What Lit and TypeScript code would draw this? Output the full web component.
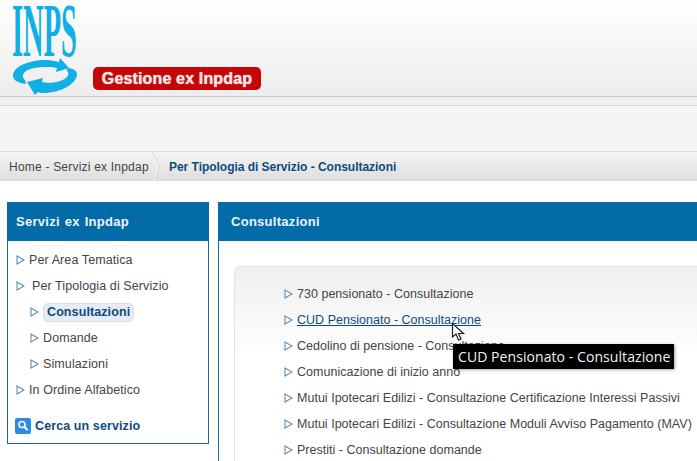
import { LitElement, html, css } from "lit";
import { customElement } from "lit/decorators.js";

const arrow = html`<svg class="arr" width="9" height="10" viewBox="0 0 9 10"><path d="M1 1 L8 5 L1 9 Z" fill="#fff" stroke="#5d8fb5" stroke-width="1.1"/></svg>`;

const items = [
  "730 pensionato - Consultazione",
  "CUD Pensionato - Consultazione",
  "Cedolino di pensione - Consultazione",
  "Comunicazione di inizio anno",
  "Mutui Ipotecari Edilizi - Consultazione Certificazione Interessi Passivi",
  "Mutui Ipotecari Edilizi - Consultazione Moduli Avviso Pagamento (MAV)",
  "Prestiti - Consultazione domande",
];

@customElement("app-root")
export class AppRoot extends LitElement {
  static styles = css`
    :host { display: block; width: 697px; height: 461px; overflow: hidden; position: relative; background: #fff;
      font-family: "Liberation Sans", Arial, sans-serif; font-size: 12.5px; color: #444; }
    .head { height: 96px; background: linear-gradient(#fff, #ededed); border-bottom: 1px solid #c6caca; display: flex; align-items: flex-start; }
    .logo { width: 93px; height: 96px; flex: none; position: relative; }
    .inps { position: absolute; left: 12px; top: 0; font-family: "Liberation Serif", serif; font-weight: bold; color: #12aee6; font-size: 76px; line-height: 60px; transform-origin: 0 0; transform: scaleX(0.375); white-space: nowrap; }
    .swirl { position: absolute; left: 12px; top: 58px; }
    .badge { margin-top: 67px; width: 168px; height: 23px; border-radius: 5px; background: #c60606; color: #f0e6e6; font-weight: bold; font-size: 16px; letter-spacing: .15px; line-height: 23px; text-align: center; white-space: nowrap; text-shadow: 0 0 1px #fff; }
    .band1 { height: 8px; background: #eeefef; border-bottom: 1px solid #d6d8d8; }
    .band2 { height: 45px; background: #f5f5f5; border-bottom: 1px solid #dcdcdc; }
    .crumb { height: 29px; background: linear-gradient(#f4f4f4, #dedede); display: flex; align-items: center; line-height: 30px; font-size: 12px; }
    .c1 { padding-left: 9px; width: 142px; color: #444; flex: none; white-space: nowrap; letter-spacing: .21px; }
    .sep { flex: none; width: 18px; height: 29px; }
    .c2 { font-weight: bold; color: #0f4a80; white-space: nowrap; letter-spacing: -.03px; }
    .main { display: flex; gap: 9px; padding: 21px 0 0 7px; align-items: flex-start; }
    .side { width: 202px; flex: none; }
    .ph { height: 39px; background: #026ba8; color: #eef4f8; font-weight: bold; font-size: 13px; line-height: 39px; padding-left: 9px; letter-spacing: .28px; }
    .sb { height: 202px; border: 1px solid #1a6b94; border-top: 0; width: 200px; letter-spacing: .1px; }
    .sb-in { padding-top: 6px; display: flex; flex-direction: column; }
    .r { height: 26px; display: flex; align-items: center; white-space: nowrap; }
    .arr { flex: none; }
    .lv0 { padding-left: 8px; }
    .lv0 .arr { margin-right: 4px; }
    .lv1 { padding-left: 22px; }
    .lv1 .arr { margin-right: 4px; }
    .pill { font-weight: bold; color: #0f4a80; background: #e6ecf6; border: 1px solid #d5deec; border-radius: 5px; padding: 1px 3px; line-height: 15px; }
    .cerca { display: flex; align-items: center; gap: 4px; margin: 15px 0 0 7px; font-weight: bold; color: #0f4a80; }
    .ic { width: 16px; height: 16px; flex: none; }
    .mainp { flex: 1; min-width: 0; }
    .mainp .ph { padding-left: 13px; }
    .mb { height: 300px; border-left: 1px solid #1a6b94; padding: 25px 0 0 15px; }
    .box { border: 1px solid #dfe1e6; border-right: 0; border-bottom: 0; border-radius: 6px 0 0 0; height: 260px; background: linear-gradient(#efefef, #fff 90px); padding: 14px 0 0 49px; letter-spacing: .02px; }
    .it { height: 26px; display: flex; align-items: center; white-space: nowrap; gap: 4px; }
    a { color: #0f4a80; text-decoration: underline; }
    .tip { position: absolute; left: 453px; top: 344px; width: 221px; height: 25px; background: #000; color: #f2f2f2; font-family: "Open Sans", sans-serif; font-size: 14px; letter-spacing: .07px; line-height: 25px; padding-left: 5px; box-sizing: border-box; white-space: nowrap; box-shadow: 1px 1px 3px rgba(0,0,0,.35); }
    .cur { position: absolute; left: 451px; top: 322px; }
  `;

  render() {
    return html`
      <div class="head">
        <div class="logo">
          <div class="inps">INPS</div>
          <svg class="swirl" width="68" height="37" viewBox="0 0 68 37">
            <path d="M1 18 C1 8 18 2 34 2 C39 2 43 3 47 4 L48 0 L57 10 L44 14 L45 10 C36 8 20 9 14 13 C10 16 10 19 13 22 L14 26 C6 25 1 22 1 18Z" fill="#12aee6"/>
            <path d="M65 16 C65 26 48 35 32 35 C30 35 28 35 26 34 L23 37 L15 24 L31 20 L30 24 C38 26 49 24 54 20 C57 17 57 14 54 12 L57 10 C62 11 65 13 65 16Z" fill="#12aee6"/>
          </svg>
        </div>
        <div class="badge">Gestione ex Inpdap</div>
      </div>
      <div class="band1"></div>
      <div class="band2"></div>
      <div class="crumb">
        <div class="c1">Home - Servizi ex Inpdap</div>
        <svg class="sep" viewBox="0 0 18 29"><path d="M1 0 L8 14 L4 29" fill="none" stroke="#cfcfcf" stroke-width="1"/><path d="M0 0 L7 14 L3 29" fill="none" stroke="#fafafa" stroke-width="1"/></svg>
        <div class="c2">Per Tipologia di Servizio - Consultazioni</div>
      </div>
      <div class="main">
        <div class="side">
          <div class="ph" style="word-spacing:1px">Servizi ex Inpdap</div>
          <div class="sb"><div class="sb-in">
            <div class="r lv0">${arrow}Per Area Tematica</div>
            <div class="r lv0">${arrow}<span style="margin-left:3px">Per Tipologia di Servizio</span></div>
            <div class="r lv1">${arrow}<span class="pill">Consultazioni</span></div>
            <div class="r lv1">${arrow}Domande</div>
            <div class="r lv1">${arrow}Simulazioni</div>
            <div class="r lv0">${arrow}In Ordine Alfabetico</div>
            <div class="cerca">
              <svg class="ic" viewBox="0 0 16 16"><rect width="16" height="16" rx="2" fill="#2b8de0"/><circle cx="7" cy="6.5" r="3" fill="none" stroke="#fff" stroke-width="1.6"/><path d="M9.3 8.8 L12.5 12" stroke="#fff" stroke-width="2"/></svg>
              Cerca un servizio
            </div>
          </div></div>
        </div>
        <div class="mainp">
          <div class="ph">Consultazioni</div>
          <div class="mb"><div class="box">
            ${items.map((t, i) => html`<div class="it">${arrow}${i === 1 ? html`<a>${t}</a>` : t}</div>`)}
          </div></div>
        </div>
      </div>
      <div class="tip">CUD Pensionato - Consultazione</div>
      <svg class="cur" width="15" height="20" viewBox="0 0 15 20"><path d="M1.5 1.5 L1.5 15 L5 12 L7.5 18 L10 17 L7.5 11.5 L12.5 11.5 Z" fill="#fff" stroke="#222" stroke-width="1.2"/></svg>
    `;
  }
}
